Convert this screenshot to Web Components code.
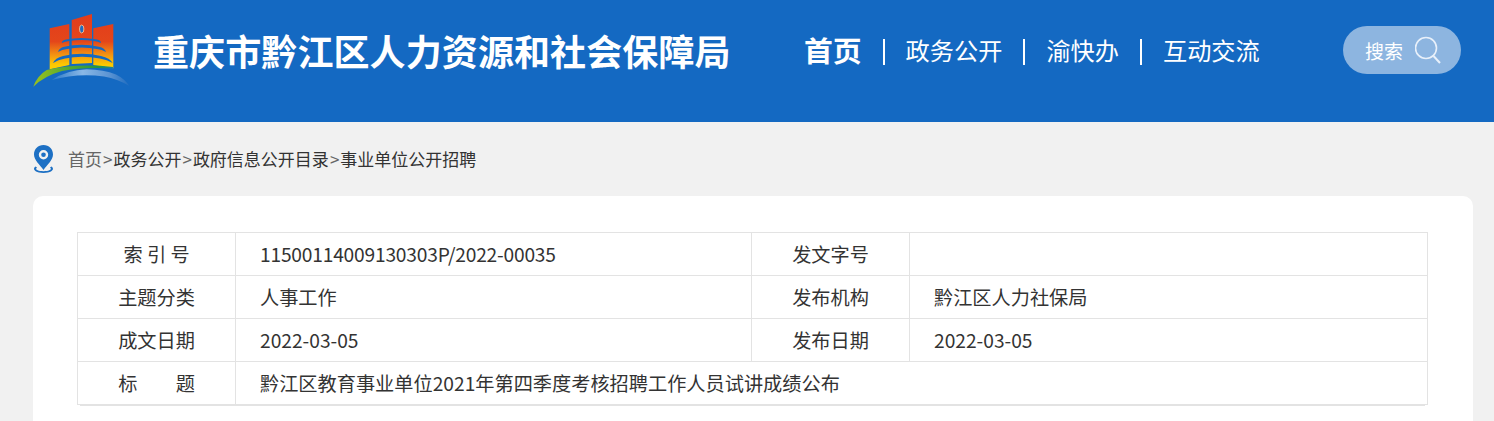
<!DOCTYPE html>
<html lang="zh-CN">
<head>
<meta charset="utf-8">
<title>重庆市黔江区人力资源和社会保障局</title>
<style>
  html, body { margin: 0; padding: 0; background: #f1f1f1; height: 421px; overflow: hidden; }
  body { font-family: "Noto Sans CJK SC", "Noto Sans", sans-serif; color: #333; }
</style>
</head>
<body>
<site-header></site-header>
<bread-crumb></bread-crumb>
<info-card>
  <info-table>
    <info-row tight label="索 引 号" value="11500114009130303P/2022-00035" label2="发文字号" value2=""></info-row>
    <info-row label="主题分类" value="人事工作" label2="发布机构" value2="黔江区人力社保局"></info-row>
    <info-row label="成文日期" value="2022-03-05" label2="发布日期" value2="2022-03-05"></info-row>
    <info-row wide label="标　　题" value="黔江区教育事业单位2021年第四季度考核招聘工作人员试讲成绩公布"></info-row>
  </info-table>
</info-card>
<script>
class SiteHeader extends HTMLElement {
    constructor() {
        super();
        this.attachShadow({ mode: 'open' });
    }

    connectedCallback() {
        this.shadowRoot.innerHTML = `
            <style>
                :host {
                    display: flex;
                    align-items: flex-start;
                    height: 122px;
                    background: #1469c2;
                    color: #fff;
                }
                .logo { display: block; margin: 14px 0 0 32px; width: 98px; height: 74px; flex: none; }
                h1 {
                    margin: 24px 0 0 23px;
                    font-size: 36px;
                    line-height: 52px;
                    font-weight: 700;
                    letter-spacing: .1px;
                    white-space: nowrap;
                    width: 651px;
                    flex: none;
                }
                nav { display: flex; align-items: center; margin-top: 28px; height: 42px; font-size: 24.2px; white-space: nowrap; }
                nav b { font-size: 28.8px; font-weight: 700; }
                nav i { width: 2px; height: 26px; background: #fff; margin: 6px 21px 0; }
                .search {
                    position: absolute;
                    left: 1343px;
                    top: 26px;
                    width: 118px;
                    height: 48px;
                    border-radius: 24px;
                    background: #8db5e0;
                    display: flex;
                    align-items: center;
                    box-sizing: border-box;
                    padding-left: 22px;
                    gap: 12px;
                    font-size: 19px;
                }
                .search svg { display: block; }
            </style>
            <svg class="logo" viewBox="0 0 98 74">
                <defs>
                    <linearGradient id="wall" gradientUnits="userSpaceOnUse" x1="0" y1="0" x2="0" y2="55">
                        <stop offset="0" stop-color="#e23c1c"/>
                        <stop offset=".5" stop-color="#e4461a"/>
                        <stop offset=".75" stop-color="#f39612"/>
                        <stop offset=".92" stop-color="#fdc800"/>
                        <stop offset="1" stop-color="#fdd000"/>
                    </linearGradient>
                    <linearGradient id="grass" x1="0" y1="0" x2="1" y2="0">
                        <stop offset="0" stop-color="#9cc21c"/>
                        <stop offset=".35" stop-color="#62ad2e"/>
                        <stop offset=".8" stop-color="#259740"/>
                        <stop offset="1" stop-color="#1d7fa0"/>
                    </linearGradient>
                    <linearGradient id="river" x1="0" y1="0" x2="1" y2="0">
                        <stop offset="0" stop-color="#2a79c9"/>
                        <stop offset=".4" stop-color="#8ab8e6"/>
                        <stop offset=".75" stop-color="#5a93d2"/>
                        <stop offset="1" stop-color="#1f6cc0"/>
                    </linearGradient>
                </defs>
                <path d="M17.700 14.300 L37.300 10 V51 L17.700 55.300Z M39.700 6 L60 0 V49 L39.700 50Z M61.300 14.300 L81.300 10 V54.300 L61.300 51Z" fill="url(#wall)"/>
                <ellipse cx="49.700" cy="15" rx="2.200" ry="4" fill="#1f6cc0" stroke="#f2b48a" stroke-width="1"/>
                <path d="M29.700 29 Q30 26 34 25.500 Q49.500 22.500 65 25.500 Q69 26 69 29 Q66 27.500 62 27 Q49.500 25 37 27 Q33 27.500 29.700 29Z" fill="#1469c2"/>
                <path d="M26 38 Q27 34 32 32.700 Q49.500 29 67 32.700 Q73 34 74 38 Q70 35.500 65 35 Q49.500 32 35 35 Q30 35.500 26 38Z" fill="#1469c2"/>
                <path d="M21 49 Q23 44 31 42 Q50 37.500 69 42 Q78 44 80.700 49 Q75 45.500 68 44.500 Q50 41 33 44.500 Q26 45.500 21 49Z" fill="#1469c2"/>
                <path d="M1.300 72.700 Q5 62 14.700 56 Q45 49 81 53 Q81 54.500 81 54.500 Q50 53 30 57 Q12 62 1.300 72.700Z" fill="url(#grass)"/>
                <path d="M19.700 66 Q35 56 54.700 55.300 Q72 55.500 84 60.500 Q93 65 97.300 72 Q86 65 72 62.500 Q45 59 19.700 66Z" fill="url(#river)"/>
            </svg>
            <h1>重庆市黔江区人力资源和社会保障局</h1>
            <nav>
                <b>首页</b><i></i><span>政务公开</span><i></i><span>渝快办</span><i></i><span>互动交流</span>
            </nav>
            <div class="search">
                <span>搜索</span>
                <svg width="28" height="30" viewBox="0 0 28 30" fill="none" stroke="#fff">
                    <circle cx="11" cy="13" r="10.500" stroke-width="1.600" stroke="#e8f0fa"/>
                    <path d="M18.500 21 L25 28" stroke-width="2" stroke="#e8f0fa"/>
                </svg>
            </div>
        `;
    }
}

class BreadCrumb extends HTMLElement {
    constructor() {
        super();
        this.attachShadow({ mode: 'open' });
    }

    connectedCallback() {
        this.shadowRoot.innerHTML = `
            <style>
                :host {
                    display: flex;
                    align-items: center;
                    height: 74px;
                    padding-left: 33px;
                    font-size: 17px;
                    color: #333;
                    white-space: nowrap;
                }
                svg { display: block; margin: 0 14px 0 0; flex: none; }
                .trail { margin-bottom: 2px; }
                .home { color: #666; }
                .gt { color: #666; margin: 0 1px; }
            </style>
            <svg width="21" height="29" viewBox="0 0 21 29">
                <path d="M2.500 21.500 C0 23 -.5 27.500 10.500 28 C21.500 27.500 21 23 18.500 21.500 L17 22.500 C19 24 18 26 10.500 26.300 C3 26 2 24 4 22.500Z" fill="#1d70c4"/>
                <path fill-rule="evenodd" d="M10.500 0 C16 0 20 4 20 9.500 C20 15 14 20 10.500 25 C7 20 1 15 1 9.500 C1 4 5 0 10.500 0Z M10.500 5 A4.700 4.700 0 1 0 10.500 14.400 A4.700 4.700 0 1 0 10.500 5Z" fill="#1d70c4"/>
                <circle cx="10.500" cy="9.700" r="2.300" fill="#1d70c4"/>
            </svg>
            <span class="trail"><span class="home">首页</span><span class="gt">&gt;</span>政务公开<span class="gt">&gt;</span>政府信息公开目录<span class="gt">&gt;</span>事业单位公开招聘</span>
        `;
    }
}

class InfoCard extends HTMLElement {
    constructor() {
        super();
        this.attachShadow({ mode: 'open' });
    }

    connectedCallback() {
        this.shadowRoot.innerHTML = `
            <style>
                :host {
                    display: block;
                    box-sizing: border-box;
                    margin: 0 21px 0 33px;
                    padding: 36px 45px 0 44px;
                    height: 225px;
                    background: #fff;
                    border-radius: 10px 10px 0 0;
                }
            </style>
            <slot></slot>
        `;
    }
}

class InfoTable extends HTMLElement {
    constructor() {
        super();
        this.attachShadow({ mode: 'open' });
    }

    connectedCallback() {
        this.shadowRoot.innerHTML = `
            <style>
                :host {
                    display: block;
                    border: 1px solid #e3e3e3;
                    border-bottom: 0;
                    box-shadow: 0 4px 0 -3px #e3e3e3;
                }
            </style>
            <slot></slot>
        `;
    }
}

class InfoRow extends HTMLElement {
    constructor() {
        super();
        this.attachShadow({ mode: 'open' });
    }

    connectedCallback() {
        const label = this.getAttribute('label') || '';
        const value = this.getAttribute('value') || '';
        const label2 = this.getAttribute('label2') || '';
        const value2 = this.getAttribute('value2') || '';
        const second = this.hasAttribute('wide') ? '' : `
            <div class="k">${label2}</div>
            <div class="v">${value2}</div>`;

        this.shadowRoot.innerHTML = `
            <style>
                :host {
                    display: grid;
                    grid-template-columns: 157px 516px 158px 1fr;
                    height: 43px;
                    box-sizing: border-box;
                    border-bottom: 1px solid #e3e3e3;
                    font-size: 19.2px;
                    line-height: 42px;
                    color: #333;
                    white-space: nowrap;
                }
                :host([wide]) { grid-template-columns: 157px 1fr; }
                :host([tight]) .k + .v { letter-spacing: -.2px; }
                .k { text-align: center; }
                .v { padding-left: 24px; border-left: 1px solid #e3e3e3; }
                .v + .k { border-left: 1px solid #e3e3e3; }
            </style>
            <div class="k">${label}</div>
            <div class="v">${value}</div>${second}
        `;
    }
}

customElements.define('site-header', SiteHeader);
customElements.define('bread-crumb', BreadCrumb);
customElements.define('info-card', InfoCard);
customElements.define('info-table', InfoTable);
customElements.define('info-row', InfoRow);
</script>
</body>
</html>
